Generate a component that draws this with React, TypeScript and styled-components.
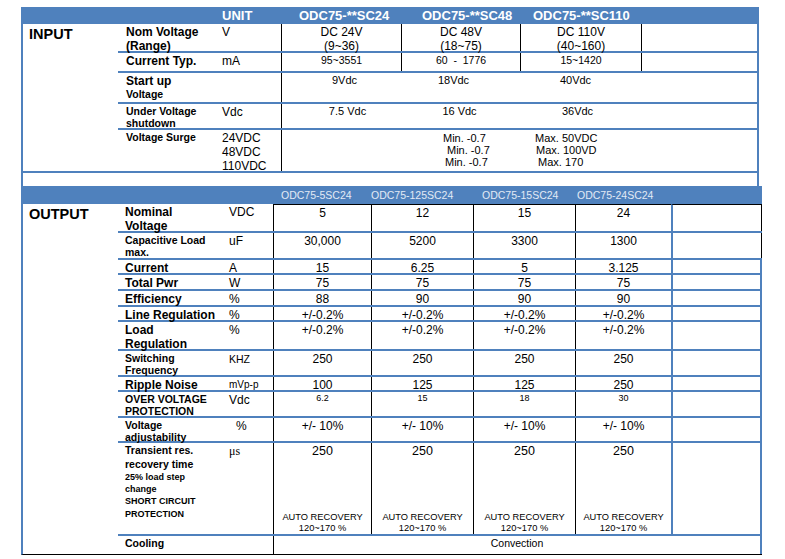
import React from 'react'
import styled, { createGlobalStyle } from 'styled-components'

const BLUE = '#4f81bd'
const INK = '#000'

const IN_COLS = '100px 63px 120px 119px 121px 1fr'
const OUT_COLS = '107px 48px 98px 102px 102px 96px 1fr'

type LineSpec = { text: string; size: number; lh?: number }

type OutRow = {
  label: LineSpec[]
  unit?: string
  unitSize?: number
  unitIndent?: number
  serifUnit?: boolean
  values: string[]
  size?: number
  h: number
  edge: 'black' | 'blue'
  capped?: boolean
  recovery?: boolean
}

const big = (text: string): LineSpec => ({ text, size: 12 })
const mid = (text: string): LineSpec => ({ text, size: 10.5 })

const OUT_MODELS: [string, number][] = [
  ['ODC75-5SC24', 8],
  ['ODC75-125SC24', 0],
  ['ODC75-15SC24', 9],
  ['ODC75-24SC24', 2],
]

const OUTPUT_ROWS: OutRow[] = [
  { label: [big('Nominal'), big('Voltage')], unit: 'VDC', values: ['5', '12', '15', '24'], h: 29, edge: 'black', capped: true },
  { label: [mid('Capacitive Load'), mid('max.')], unit: 'uF', values: ['30,000', '5200', '3300', '1300'], h: 27, edge: 'black' },
  { label: [big('Current')], unit: 'A', values: ['15', '6.25', '5', '3.125'], h: 15, edge: 'blue' },
  { label: [big('Total Pwr')], unit: 'W', values: ['75', '75', '75', '75'], h: 16, edge: 'blue' },
  { label: [big('Efficiency')], unit: '%', values: ['88', '90', '90', '90'], h: 16, edge: 'blue' },
  { label: [big('Line Regulation')], unit: '%', values: ['+/-0.2%', '+/-0.2%', '+/-0.2%', '+/-0.2%'], h: 15, edge: 'blue' },
  { label: [big('Load'), big('Regulation')], unit: '%', values: ['+/-0.2%', '+/-0.2%', '+/-0.2%', '+/-0.2%'], h: 29, edge: 'blue' },
  { label: [mid('Switching'), mid('Frequency')], unit: 'KHZ', unitSize: 10.5, values: ['250', '250', '250', '250'], h: 26, edge: 'blue' },
  { label: [big('Ripple Noise')], unit: 'mVp-p', unitSize: 10, values: ['100', '125', '125', '250'], h: 15, edge: 'blue' },
  { label: [mid('OVER VOLTAGE'), mid('PROTECTION')], unit: 'Vdc', values: ['6.2', '15', '18', '30'], size: 9, h: 26, edge: 'blue' },
  { label: [mid('Voltage'), mid('adjustability')], unit: '%', unitIndent: 11, values: ['+/- 10%', '+/- 10%', '+/- 10%', '+/- 10%'], h: 25, edge: 'blue' },
  {
    label: [
      { text: 'Transient res.', size: 10.5, lh: 13.5 },
      { text: 'recovery time', size: 10.5, lh: 13.5 },
      { text: '25% load step', size: 9, lh: 12 },
      { text: 'change', size: 9, lh: 12 },
      { text: 'SHORT CIRCUIT', size: 9, lh: 12.5 },
      { text: 'PROTECTION', size: 9, lh: 12.5 },
    ],
    unit: 'μs',
    serifUnit: true,
    values: ['250', '250', '250', '250'],
    size: 12.5,
    h: 93,
    edge: 'blue',
    recovery: true,
  },
]

const App: React.FC = () => {
  return (
    <>
      <GlobalStyle />
      <Page>
        <InputBox>
          <HeaderBar $cols={`95px ${IN_COLS}`} $height={17} $bold>
            <HeadCell />
            <HeadCell />
            <HeadCell $indent={4}>UNIT</HeadCell>
            <HeadCell $indent={18}>ODC75-**SC24</HeadCell>
            <HeadCell $indent={21}>ODC75-**SC48</HeadCell>
            <HeadCell $indent={13}>ODC75-**SC110</HeadCell>
          </HeaderBar>
          <Body $rule>
            <SectionTitle>INPUT</SectionTitle>
            <Rows>
              <Row $cols={IN_COLS} $h={29}>
                <Label $indent={8}>
                  <Line $size={12}>Nom Voltage</Line>
                  <Line $size={12}>(Range)</Line>
                </Label>
                <Unit>V</Unit>
                <Value $ruled>
                  DC 24V{'\n'}(9~36)
                </Value>
                <Value $ruled>
                  DC 48V{'\n'}(18~75)
                </Value>
                <Value $ruled>
                  DC 110V{'\n'}(40~160)
                </Value>
                <Value $ruled />
              </Row>
              <Row $cols={IN_COLS} $h={20}>
                <Label $indent={8}>
                  <Line $size={12}>Current Typ.</Line>
                </Label>
                <Unit>mA</Unit>
                <Value $ruled $size={10.5}>95~3551</Value>
                <Value $ruled $size={10.5}>{'60  -  1776'}</Value>
                <Value $ruled $size={10.5}>15~1420</Value>
                <Value $ruled />
              </Row>
              <Row $cols={IN_COLS} $h={31}>
                <Label $indent={8}>
                  <Line $size={12}>Start up</Line>
                  <Line $size={10.5}>Voltage</Line>
                </Label>
                <Unit />
                <Value $ruled $size={11} $shift={3}>9Vdc</Value>
                <Value $size={11} $shift={-7}>18Vdc</Value>
                <Value $size={11} $shift={-5}>40Vdc</Value>
                <Value />
              </Row>
              <Row $cols={IN_COLS} $h={26}>
                <Label $indent={8}>
                  <Line $size={10.5}>Under Voltage</Line>
                  <Line $size={10.5}>shutdown</Line>
                </Label>
                <Unit>Vdc</Unit>
                <Value $ruled $size={11} $shift={6}>7.5 Vdc</Value>
                <Value $size={11} $shift={-1}>16 Vdc</Value>
                <Value $size={11} $shift={-3}>36Vdc</Value>
                <Value />
              </Row>
              <Row $cols={IN_COLS} $h={41} $rule={false}>
                <Label $indent={8}>
                  <Line $size={10.5}>Voltage Surge</Line>
                </Label>
                <Unit>
                  24VDC{'\n'}48VDC{'\n'}110VDC
                </Unit>
                <Value $ruled />
                <Surge>
                  <SurgeLine $indent={42}>Min. -0.7</SurgeLine>
                  <SurgeLine $indent={46}>Min. -0.7</SurgeLine>
                  <SurgeLine $indent={44}>Min. -0.7</SurgeLine>
                </Surge>
                <Surge>
                  <SurgeLine $indent={15}>Max. 50VDC</SurgeLine>
                  <SurgeLine $indent={16}>Max. 100VD</SurgeLine>
                  <SurgeLine $indent={18}>Max. 170</SurgeLine>
                </Surge>
                <Value />
              </Row>
            </Rows>
          </Body>
        </InputBox>

        <OutputBox>
          <HeaderBar $cols={`95px ${OUT_COLS}`} $height={18}>
            <HeadCell />
            <HeadCell />
            <HeadCell />
            {OUT_MODELS.map(([name, indent]) => (
              <HeadCell key={name} $indent={indent}>
                {name}
              </HeadCell>
            ))}
          </HeaderBar>
          <Body>
            <SectionTitle>OUTPUT</SectionTitle>
            <Rows>
              {OUTPUT_ROWS.map((row, i) => (
                <Row key={i} $cols={OUT_COLS} $h={row.h}>
                  <Label $indent={7}>
                    {row.label.map((l, j) => (
                      <Line key={j} $size={l.size} $lh={l.lh}>
                        {l.text}
                      </Line>
                    ))}
                  </Label>
                  <Unit $size={row.unitSize} $indent={row.unitIndent} $serif={row.serifUnit}>
                    {row.unit}
                  </Unit>
                  {row.values.map((v, j) =>
                    row.recovery ? (
                      <Stack key={j} $ruled $size={row.size}>
                        <span>{v}</span>
                        <Recovery>
                          AUTO RECOVERY
                          <br />
                          120~170 %
                        </Recovery>
                      </Stack>
                    ) : (
                      <Value key={j} $ruled $capped={row.capped} $size={row.size}>
                        {v}
                      </Value>
                    )
                  )}
                  <EndCell $edge={row.edge} $capped={row.capped} />
                </Row>
              ))}
              <Row $cols={OUT_COLS} $h={18} $rule={false}>
                <Label $indent={7}>
                  <Line $size={10.5}>Cooling</Line>
                </Label>
                <Unit />
                <Spread $ruled $size={10.5}>
                  Convection
                </Spread>
              </Row>
            </Rows>
          </Body>
        </OutputBox>
      </Page>
    </>
  )
}

export default App

const GlobalStyle = createGlobalStyle`
  html, body {
    margin: 0;
    background: #fff;
  }
  body {
    font-family: 'Liberation Sans', Arial, sans-serif;
    color: ${INK};
  }
  * {
    box-sizing: border-box;
  }
`

const Page = styled.div`
  width: 785px;
  height: 559px;
  padding: 7px 0 0 21px;
  overflow: hidden;
`

const InputBox = styled.section`
  width: 738px;
  border-left: 2px solid ${BLUE};
  border-right: 2px solid ${BLUE};
  padding-bottom: 13px;
`

const OutputBox = styled.section`
  width: 741px;
  border-left: 2px solid ${BLUE};
  border-bottom: 1px solid ${INK};
`

const HeaderBar = styled.div<{ $cols: string; $height: number; $bold?: boolean }>`
  display: grid;
  grid-template-columns: ${p => p.$cols};
  height: ${p => p.$height}px;
  background: ${BLUE};
  color: ${p => (p.$bold ? '#fff' : '#e2eaf5')};
  font-size: ${p => (p.$bold ? 13 : 10.5)}px;
  font-weight: ${p => (p.$bold ? 700 : 400)};
  line-height: ${p => p.$height}px;
  white-space: nowrap;
`

const HeadCell = styled.div<{ $indent?: number }>`
  padding-left: ${p => p.$indent ?? 0}px;
`

const Body = styled.div<{ $rule?: boolean }>`
  display: flex;
  ${p => p.$rule && `border-bottom: 2px solid ${BLUE};`}
`

const SectionTitle = styled.div`
  width: 95px;
  flex: none;
  padding: 1.5px 0 0 6px;
  font-size: 14.5px;
  font-weight: 700;
  line-height: 17px;
`

const Rows = styled.div`
  flex: 1;
  min-width: 0;
`

const Row = styled.div<{ $cols: string; $h: number; $rule?: boolean }>`
  display: grid;
  grid-template-columns: ${p => p.$cols};
  grid-template-rows: minmax(0, 1fr);
  height: ${p => p.$h}px;
  ${p => p.$rule !== false && `border-bottom: 2px solid ${BLUE};`}
`

const Label = styled.div<{ $indent: number }>`
  padding: 1px 0 0 ${p => p.$indent}px;
  font-weight: 700;
  white-space: nowrap;
`

const Line = styled.span<{ $size: number; $lh?: number }>`
  display: block;
  font-size: ${p => p.$size}px;
  line-height: ${p => p.$lh ?? Math.round(p.$size * 1.17)}px;
`

const Unit = styled.div<{ $size?: number; $indent?: number; $serif?: boolean }>`
  padding: 1px 0 0 ${p => p.$indent ?? 4}px;
  font-size: ${p => p.$size ?? 12}px;
  line-height: 14px;
  white-space: pre;
  ${p => p.$serif && `font-family: 'Liberation Serif', 'Times New Roman', serif;`}
`

const Value = styled.div<{ $ruled?: boolean; $capped?: boolean; $size?: number; $shift?: number }>`
  ${p => p.$ruled && `border-left: 1px solid ${INK};`}
  ${p => p.$capped && `border-top: 1px solid ${INK};`}
  padding: 1px ${p => Math.max(0, -(p.$shift ?? 0) * 2)}px 0
    ${p => Math.max(0, (p.$shift ?? 0) * 2)}px;
  text-align: center;
  font-size: ${p => p.$size ?? 12}px;
  line-height: ${p => Math.round((p.$size ?? 12) * 1.17)}px;
  white-space: pre;
`

const Stack = styled(Value)`
  display: flex;
  flex-direction: column;
  justify-content: space-between;
  align-items: center;
  padding-bottom: 1px;
`

const Recovery = styled.div`
  font-size: 9.3px;
  line-height: 10.5px;
`

const Spread = styled(Value)`
  grid-column: 3 / -1;
  border-right: 2px solid ${BLUE};
`

const EndCell = styled.div<{ $edge: 'black' | 'blue'; $capped?: boolean }>`
  border-left: 2px solid ${BLUE};
  border-right: ${p => (p.$edge === 'black' ? `1px solid ${INK}` : `2px solid ${BLUE}`)};
  ${p => p.$capped && `border-top: 1px solid ${INK};`}
`

const Surge = styled.div`
  padding-top: 2px;
  font-size: 11px;
  line-height: 12px;
  white-space: nowrap;
`

const SurgeLine = styled.span<{ $indent: number }>`
  display: block;
  padding-left: ${p => p.$indent}px;
`
